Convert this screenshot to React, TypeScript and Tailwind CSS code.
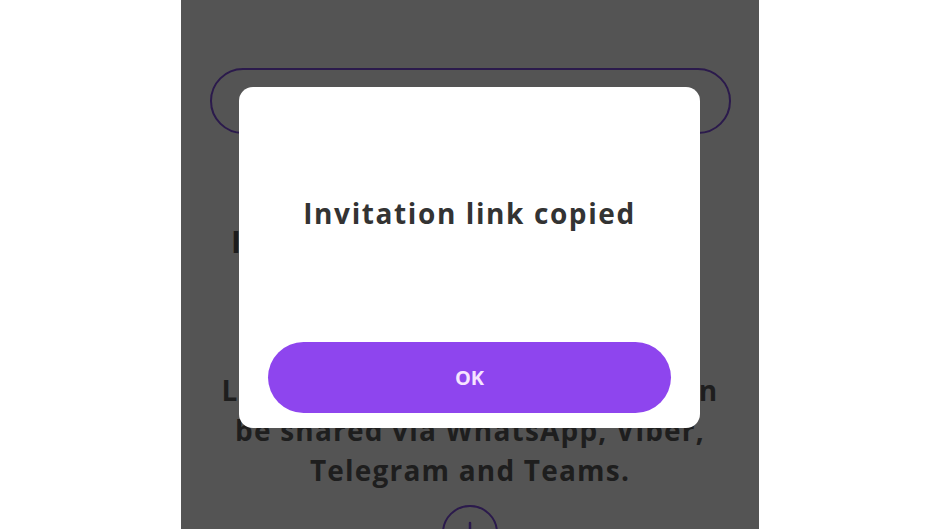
export default function App() {
  return (
    <div className="w-[940px] h-[529px] bg-white flex justify-center overflow-hidden" style={{ fontFamily: '"Open Sans", "Liberation Sans", sans-serif' }}>
      <div className="relative w-[578px] h-[529px] bg-[#545454] overflow-hidden">
        <div className="flex flex-col items-center pt-[68px]">
          <div className="w-[521px] h-[66px] rounded-full border-2 border-[#2b1a4c] shrink-0" />
          <div className="self-start ml-[50px] mt-[90px] text-[#1c1c1c] text-[30px] font-bold leading-[36px]">
            Invite participants
          </div>
          <div className="mt-[110px] text-center text-[#1e1e1e] text-[28px] font-bold leading-[40px] tracking-[1.2px] whitespace-nowrap">
            <div>Link for this online meetings can</div>
            <div>be shared via WhatsApp, Viber,</div>
            <div>Telegram and Teams.</div>
          </div>
          <div className="mt-[15px] w-[56px] h-[56px] rounded-full border-2 border-[#2b1a4c] flex items-center justify-center shrink-0">
            <svg width="28" height="28" viewBox="0 0 28 28" fill="none" stroke="#2b1a4c" strokeWidth="2.5" strokeLinecap="round">
              <path d="M14 4v20M4 14h20" />
            </svg>
          </div>
        </div>

        <div className="absolute left-[58px] top-[87px] w-[461px] h-[341px] bg-white rounded-[14px] flex flex-col px-[29px] pb-[15px]">
          <div className="flex-1 flex items-center justify-center pb-[4px]">
            <span className="text-[#333333] text-[28px] font-bold tracking-[1.6px] whitespace-nowrap">Invitation link copied</span>
          </div>
          <button className="h-[71px] w-full rounded-full bg-[#8e45ee] text-[#f6e4ff] text-[20px] font-bold">
            OK
          </button>
        </div>
      </div>
    </div>
  );
}
